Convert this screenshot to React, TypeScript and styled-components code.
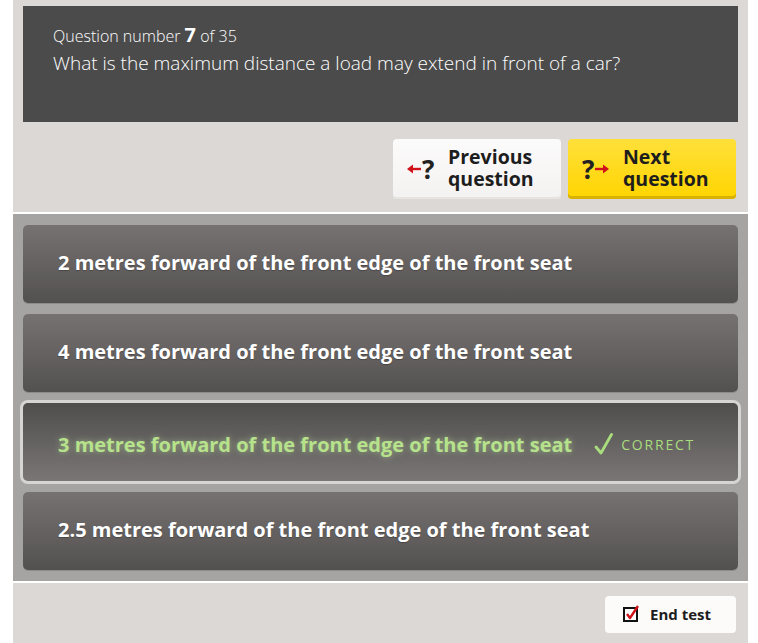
import React from "react";
import styled, { createGlobalStyle } from "styled-components";

const GlobalStyle = createGlobalStyle`
  body {
    margin: 0;
    background: #ffffff;
    font-family: "Open Sans", "DejaVu Sans", sans-serif;
  }
`;

const Page = styled.div`
  margin: 0 10px 0 13px;
  display: flex;
  flex-direction: column;
`;

const TopSection = styled.section`
  background: #dcd8d5;
  padding: 6px 12px 13px 10px;
`;

const QuestionBox = styled.div`
  background: #4b4b4b;
  height: 116px;
  box-sizing: border-box;
  padding: 18px 30px 0;
  color: #ffffff;
  margin-right: -2px;
`;

const QuestionNumber = styled.div`
  font-size: 16px;
  font-weight: 300;
  line-height: 22px;

  b {
    font-size: 20px;
    font-weight: 700;
  }
`;

const QuestionText = styled.div`
  font-size: 19px;
  font-weight: 300;
  line-height: 30px;
  margin-top: 1px;
`;

const NavRow = styled.div`
  display: flex;
  justify-content: flex-end;
  gap: 7px;
  margin-top: 17px;
`;

const NavButton = styled.button<{ $primary?: boolean }>`
  width: 168px;
  height: 60px;
  border: none;
  border-radius: 4px;
  display: flex;
  align-items: center;
  gap: 11px;
  padding: 0 0 0 14px;
  box-sizing: border-box;
  font-family: "Open Sans", sans-serif;
  font-size: 19.5px;
  font-weight: 700;
  line-height: 22px;
  text-align: left;
  color: #1d1d1d;
  cursor: pointer;
  background: ${(p) =>
    p.$primary
      ? "linear-gradient(#ffe03a, #ffd500)"
      : "linear-gradient(#fcfbfb, #f4f2f1)"};
  box-shadow: ${(p) =>
    p.$primary ? "inset 0 -3px 0 #d9b100" : "inset 0 -2px 0 #e6e3e1"};
`;

const NavLabel = styled.span`
  display: block;
  padding-bottom: 2px;
`;

const NavIcon = styled.span`
  display: flex;
  align-items: center;
  font-size: 26px;
  line-height: 30px;
  font-weight: 700;
  color: #222;
  width: 30px;
  gap: 1px;
`;

const Divider = styled.div`
  height: 2px;
  background: #ffffff;
`;

const AnswerArea = styled.section`
  background: #a6a4a2;
  padding: 11px 10px;
  display: flex;
  flex-direction: column;
  gap: 11px;
`;

const AnswerCard = styled.button<{ $selected?: boolean }>`
  height: 78px;
  border: none;
  border-radius: 5px;
  display: flex;
  align-items: center;
  box-sizing: border-box;
  padding: ${(p) => (p.$selected ? "4px 0 0 35px" : "0 0 3px 35px")};
  font-family: "Open Sans", sans-serif;
  font-size: 20px;
  font-weight: 700;
  text-align: left;
  cursor: pointer;
  color: ${(p) => (p.$selected ? "#b7e28c" : "#ffffff")};
  text-shadow: ${(p) =>
    p.$selected ? "0 0 6px rgba(200, 240, 160, 0.55)" : "0 1px 1px rgba(0,0,0,0.25)"};
  background: ${(p) =>
    p.$selected
      ? "linear-gradient(#4f4e4d, #7a7675)"
      : "linear-gradient(#767271, #535150)"};
  box-shadow: ${(p) =>
    p.$selected
      ? "0 0 0 3px #d7d5d3"
      : "0 1px 0 rgba(0,0,0,0.15)"};
`;

const Correct = styled.span`
  display: inline-flex;
  align-items: center;
  margin-left: 22px;
  font-size: 14px;
  font-weight: 400;
  letter-spacing: 1.8px;
  color: #a9dc7d;
  text-shadow: none;

  svg {
    margin-right: 8px;
  }
`;

const Footer = styled.footer`
  background: #dcd8d5;
  height: 60px;
  display: flex;
  align-items: flex-start;
  justify-content: flex-end;
  padding: 13px 12px 0 0;
  box-sizing: border-box;
`;

const EndButton = styled.button`
  width: 131px;
  height: 37px;
  border: none;
  border-radius: 4px;
  background: #fcfbfa;
  display: flex;
  align-items: center;
  gap: 10px;
  padding: 0 0 2px 18px;
  box-sizing: border-box;
  font-family: "Open Sans", sans-serif;
  font-size: 15px;
  font-weight: 700;
  color: #1d1d1d;
  cursor: pointer;
`;

const PrevIcon = () => (
  <NavIcon>
    <svg width="14" height="10" viewBox="0 0 14 10">
      <path d="M14 5H4" stroke="#d0121b" strokeWidth="2.4" />
      <path d="M0 5L6 0.5V9.5Z" fill="#d0121b" />
    </svg>
    <span>?</span>
  </NavIcon>
);

const NextIcon = () => (
  <NavIcon>
    <span>?</span>
    <svg width="14" height="10" viewBox="0 0 14 10">
      <path d="M0 5H10" stroke="#d0121b" strokeWidth="2.4" />
      <path d="M14 5L8 0.5V9.5Z" fill="#d0121b" />
    </svg>
  </NavIcon>
);

const CheckIcon = () => (
  <svg width="19" height="22" viewBox="0 0 19 22">
    <path d="M2 14 L7 20 L17.5 1.5" fill="none" stroke="#a9dc7d" strokeWidth="2.8" strokeLinecap="round" strokeLinejoin="round" />
  </svg>
);

const BoxCheckIcon = () => (
  <svg width="17" height="17" viewBox="0 0 17 17">
    <rect x="1" y="3" width="13" height="13" fill="#fff" stroke="#111" strokeWidth="2" />
    <path d="M4 9 L7 13 L15 1" fill="none" stroke="#d0121b" strokeWidth="2.4" strokeLinejoin="round" />
  </svg>
);

const answers = [
  "2 metres forward of the front edge of the front seat",
  "4 metres forward of the front edge of the front seat",
  "3 metres forward of the front edge of the front seat",
  "2.5 metres forward of the front edge of the front seat",
];

export default function App() {
  const selected = 2;
  return (
    <>
      <GlobalStyle />
      <Page>
        <TopSection>
          <QuestionBox>
            <QuestionNumber>
              Question number <b>7</b> of 35
            </QuestionNumber>
            <QuestionText>
              What is the maximum distance a load may extend in front of a car?
            </QuestionText>
          </QuestionBox>
          <NavRow>
            <NavButton>
              <PrevIcon />
              <NavLabel>
                Previous
                <br />
                question
              </NavLabel>
            </NavButton>
            <NavButton $primary>
              <NextIcon />
              <NavLabel>
                Next
                <br />
                question
              </NavLabel>
            </NavButton>
          </NavRow>
        </TopSection>
        <Divider />
        <AnswerArea>
          {answers.map((a, i) => (
            <AnswerCard key={a} $selected={i === selected}>
              {a}
              {i === selected && (
                <Correct>
                  <CheckIcon />
                  CORRECT
                </Correct>
              )}
            </AnswerCard>
          ))}
        </AnswerArea>
        <Divider />
        <Footer>
          <EndButton>
            <BoxCheckIcon />
            End test
          </EndButton>
        </Footer>
      </Page>
    </>
  );
}
